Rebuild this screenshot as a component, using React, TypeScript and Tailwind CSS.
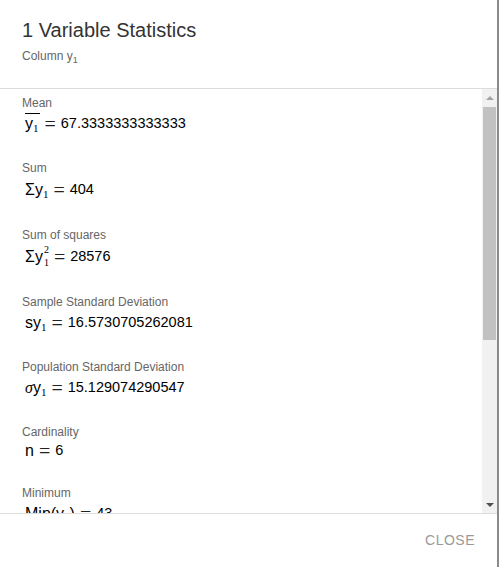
/**
 * One-variable statistics dialog: header with the column name, a scrolling
 * list of label / formula rows, and a footer with a single text button.
 */

type Stat = {
  label: string;
  name: React.ReactNode;
  value: string;
  lineClass?: string;
};

function Sub({ children }: { children: React.ReactNode }) {
  return (
    <span className="relative top-[3px] text-[11px] font-['Liberation_Serif',serif]">
      {children}
    </span>
  );
}

const y1 = (
  <>
    y<Sub>1</Sub>
  </>
);

const stats: Stat[] = [
  {
    label: "Mean",
    name: <span className="border-t border-black pt-[1px] pr-[1px]">{y1}</span>,
    value: "67.3333333333333",
  },
  { label: "Sum", name: <>Σ{y1}</>, value: "404", lineClass: "h-[24px]" },
  {
    label: "Sum of squares",
    name: (
      <>
        Σy
        <span className="relative ml-[1px] inline-flex flex-col items-start align-middle font-['Liberation_Serif',serif] text-[10px] leading-[10px]">
          <span className="relative top-[-3px]">2</span>
          <span className="relative top-[0px]">1</span>
        </span>
      </>
    ),
    value: "28576",
    lineClass: "h-[24px]",
  },
  { label: "Sample Standard Deviation", name: <>s{y1}</>, value: "16.5730705262081" },
  {
    label: "Population Standard Deviation",
    name: (
      <>
        <span className="font-['Liberation_Serif',serif] italic">σ</span>
        {y1}
      </>
    ),
    value: "15.129074290547",
  },
  { label: "Cardinality", name: <>n</>, value: "6", lineClass: "h-[18px]" },
  { label: "Minimum", name: <>Min({y1})</>, value: "43" },
  { label: "Lower Quartile", name: <>Q1({y1})</>, value: "56" },
  { label: "Median", name: <>Med({y1})</>, value: "66" },
  { label: "Upper Quartile", name: <>Q3({y1})</>, value: "81" },
  { label: "Maximum", name: <>Max({y1})</>, value: "94" },
];

function StatRow({ stat }: { stat: Stat }) {
  return (
    <li className="pb-[25px]">
      <p className="h-4 text-[12px] leading-4 text-[#666]">{stat.label}</p>
      <div
        className={`mt-[2px] flex items-center pl-[3px] text-[16px] text-black ${stat.lineClass ?? "h-[22px]"}`}
      >
        <span>{stat.name}</span>
        <span className="mx-[5px] font-['Liberation_Serif',serif] text-[20px] leading-none text-[#222]">=</span>
        <span className="text-[14.5px]">{stat.value}</span>
      </div>
    </li>
  );
}

/** Classic arrowed scrollbar, scrolled to the top. */
function Scrollbar() {
  return (
    <div className="flex w-[15px] flex-col bg-[#f1f1f1]">
      <div className="flex h-[17px] items-center justify-center">
        <span className="h-0 w-0 border-x-[4px] border-b-[4px] border-x-transparent border-b-[#a3a3a3]" />
      </div>
      <div className="flex-1 px-[1px] pt-[1px]">
        <div className="h-[233px] bg-[#c1c1c1]" />
      </div>
      <div className="flex h-[17px] items-center justify-center">
        <span className="h-0 w-0 border-x-[4px] border-t-[4px] border-x-transparent border-t-[#505050]" />
      </div>
    </div>
  );
}

export default function App() {
  return (
    <div className="flex h-[567px] w-[499px] flex-col border-r-2 border-[#8a8a8a] bg-white font-['Liberation_Sans',Arial,sans-serif]">
      <header className="border-b border-[#dcdcdc] px-[22px] pt-[18px] pb-[24px]">
        <h1 className="h-6 text-[20px] leading-6 text-[#333]">1 Variable Statistics</h1>
        <p className="mt-[6px] h-4 text-[12px] leading-4 text-[#666]">
          Column y
          <span className="relative top-[3px] text-[9px]">1</span>
        </p>
      </header>

      <div className="flex h-[424px]">
        <div className="flex-1 overflow-hidden">
          <ul className="px-[22px] pt-[6px]">
            {stats.map((stat) => (
              <StatRow key={stat.label} stat={stat} />
            ))}
          </ul>
        </div>
        <Scrollbar />
      </div>

      <footer className="flex flex-1 items-center justify-end border-t border-[#dcdcdc] pr-[20px]">
        <button
          type="button"
          className="px-[2px] text-[14px] tracking-[0.5px] text-[#999]"
        >
          CLOSE
        </button>
      </footer>
    </div>
  );
}
